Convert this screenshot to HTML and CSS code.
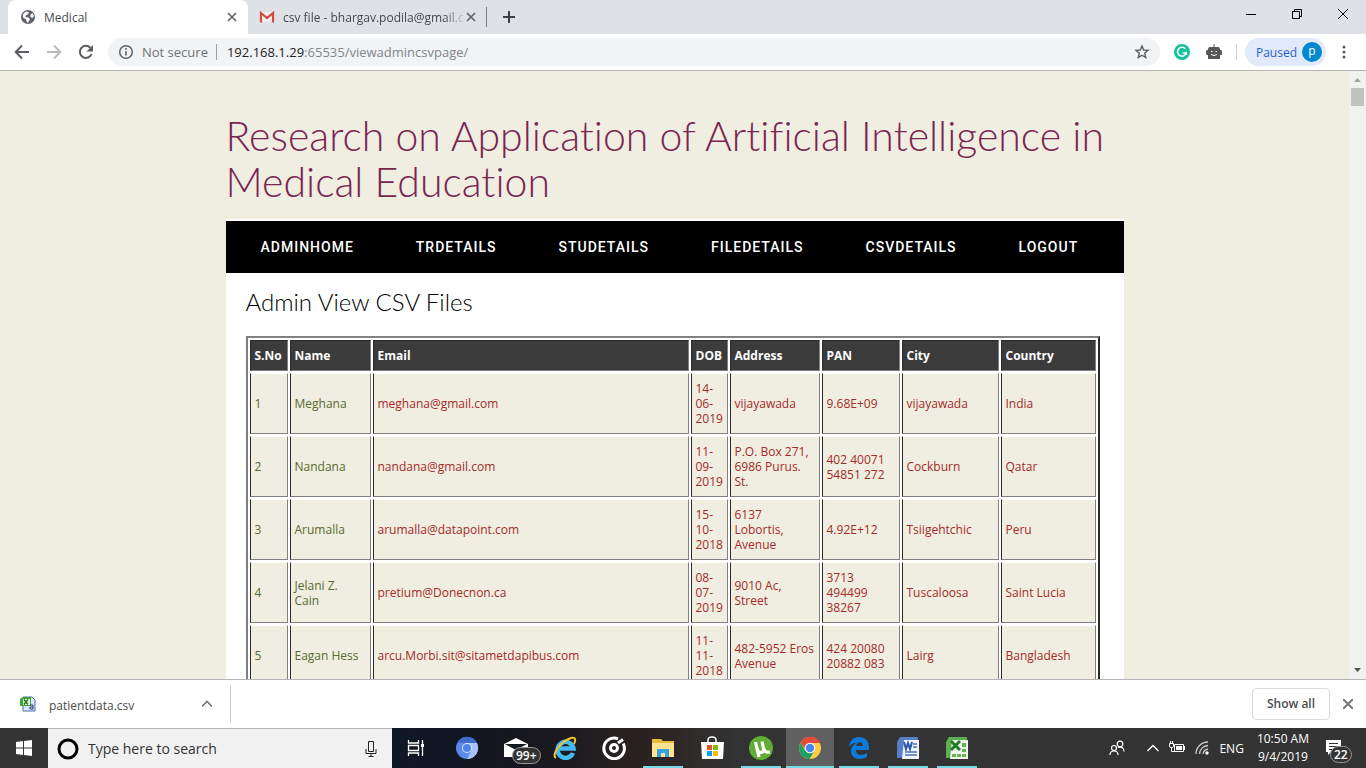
FILE: index.html
```html
<!DOCTYPE html>
<html lang="en">
<head>
    <meta charset="utf-8">
    <title>Medical</title>
    <link rel="stylesheet" href="styles.css">
</head>
<body>
    <div class="tabs">
        <div class="tab active">
            <svg width="16" height="16" viewBox="0 0 16 16"><circle cx="8" cy="8" r="7" fill="#5f6368"/><path d="M3 5l3-2.500 3 .5-1 2.500-2 .5-.5 2 3 .5 1.500 2-2 3H7l-1-3-3-2zM10.500 5.500l2-1.500 1.500 3-1.500 2-2-1z" fill="#fff"/></svg>
            <span class="tab-title">Medical</span>
            <button class="icon" aria-label="Close tab"><svg width="10" height="10" viewBox="0 0 10 10"><path d="M1 1l8 8M9 1l-8 8" stroke="#5f6368" stroke-width="1.600"/></svg></button>
        </div>
        <div class="tab">
            <svg width="16" height="16" viewBox="0 0 16 16"><path d="M2 3h12v10H2z" fill="#eee"/><path d="M2 13.500V4l6 5 6-5v9.500" fill="none" stroke="#d54b3d" stroke-width="2.200"/></svg>
            <span class="tab-title fade">csv file - bhargav.podila@gmail.c</span>
            <button class="icon" aria-label="Close tab"><svg width="10" height="10" viewBox="0 0 10 10"><path d="M1 1l8 8M9 1l-8 8" stroke="#5f6368" stroke-width="1.600"/></svg></button>
        </div>
        <button class="icon new-tab" aria-label="New tab"><svg width="12" height="12" viewBox="0 0 12 12"><path d="M6 0v12M0 6h12" stroke="#3c4043" stroke-width="2"/></svg></button>
        <div class="window-buttons">
            <button class="icon" aria-label="Minimize"><svg width="10" height="10" viewBox="0 0 10 10"><path d="M0 5.500h10" stroke="#000"/></svg></button>
            <button class="icon" aria-label="Restore"><svg width="10" height="10" viewBox="0 0 10 10"><path d="M.5 2.500h7v7h-7zM2.500 2.500v-2h7v7h-2" fill="none" stroke="#000"/></svg></button>
            <button class="icon" aria-label="Close"><svg width="10" height="10" viewBox="0 0 10 10"><path d="M0 0l10 10M10 0L0 10" stroke="#000"/></svg></button>
        </div>
    </div>

    <div class="toolbar">
        <button class="icon" aria-label="Back"><svg width="16" height="16" viewBox="0 0 16 16"><path d="M15 8H2M8 1.500L1.700 8 8 14.500" fill="none" stroke="#5a5d61" stroke-width="1.900"/></svg></button>
        <button class="icon" aria-label="Forward"><svg width="16" height="16" viewBox="0 0 16 16"><path d="M1 8h13M8 1.500L14.300 8 8 14.500" fill="none" stroke="#b9bbbe" stroke-width="1.900"/></svg></button>
        <button class="icon" aria-label="Reload"><svg width="16" height="16" viewBox="0 0 16 16"><path d="M13.500 10A6 6 0 1 1 12.300 3.800" fill="none" stroke="#5a5d61" stroke-width="2"/><path d="M15 1v6.500H8.500z" fill="#5a5d61"/></svg></button>
        <div class="address">
            <svg width="16" height="16" viewBox="0 0 16 16"><circle cx="8" cy="8" r="6.300" fill="none" stroke="#5f6368" stroke-width="1.500"/><path d="M8 7v4.500M8 4v1.700" stroke="#5f6368" stroke-width="1.600"/></svg>
            <span class="not-secure">Not secure</span>
            <span class="url"><b>192.168.1.29</b>:65535/viewadmincsvpage/</span>
            <button class="icon" aria-label="Bookmark"><svg width="16" height="16" viewBox="0 0 16 16"><path d="M8 2l1.700 4 4.300.4-3.300 2.800 1 4.300L8 11.200l-3.700 2.300 1-4.300L2 6.400 6.300 6z" fill="none" stroke="#5a5d61" stroke-width="1.400"/></svg></button>
        </div>
        <div class="extensions">
            <svg width="16" height="16" viewBox="0 0 16 16"><circle cx="8" cy="8" r="8" fill="#15c39a"/><path d="M11.300 4.800A4.400 4.400 0 1 0 12.200 9H8.800M12.300 7.800V11" fill="none" stroke="#fff" stroke-width="1.500"/></svg>
            <svg width="16" height="16" viewBox="0 0 16 16"><path d="M7.500 0h1v3H12q2 0 2 3h1q1 0 1 2.500T15 11h-1v4H2v-4H1q-1 0-1-2.500T1 6h1q0-3 2-3h3.500z" fill="#555"/><path d="M5 7.500h1.500M9.500 7.500H11M5 10.500q3 2 6 0" fill="none" stroke="#fff"/></svg>
        </div>
        <button class="profile">Paused <span class="avatar">p</span></button>
        <button class="icon" aria-label="Menu"><svg width="16" height="16" viewBox="0 0 16 16"><path d="M8 3h0M8 8h0M8 13h0" stroke="#5a5d61" stroke-width="3" stroke-linecap="round"/></svg></button>
    </div>

    <div class="viewport">
        <div class="page">
            <div class="container">
                <h1>Research on Application of Artificial Intelligence in Medical Education</h1>
                <div class="main">
                    <nav>
                        <a href="#">ADMINHOME</a>
                        <a href="#">TRDETAILS</a>
                        <a href="#">STUDETAILS</a>
                        <a href="#">FILEDETAILS</a>
                        <a href="#">CSVDETAILS</a>
                        <a href="#">LOGOUT</a>
                    </nav>
                    <div class="content">
                        <h2>Admin View CSV Files</h2>
                        <table>
                            <colgroup>
                                <col class="col-no"><col class="col-name"><col><col class="col-dob"><col class="col-address"><col class="col-pan"><col class="col-city"><col class="col-country">
                            </colgroup>
                            <tr>
                                <th>S.No</th>
                                <th>Name</th>
                                <th>Email</th>
                                <th>DOB</th>
                                <th>Address</th>
                                <th>PAN</th>
                                <th>City</th>
                                <th>Country</th>
                            </tr>
                            <tr>
                                <td class="green">1</td>
                                <td class="green">Meghana</td>
                                <td>meghana@gmail.com</td>
                                <td>14-<br>06-<br>2019</td>
                                <td>vijayawada</td>
                                <td>9.68E+09</td>
                                <td>vijayawada</td>
                                <td>India</td>
                            </tr>
                            <tr>
                                <td class="green">2</td>
                                <td class="green">Nandana</td>
                                <td>nandana@gmail.com</td>
                                <td>11-<br>09-<br>2019</td>
                                <td>P.O. Box 271,<br>6986 Purus.<br>St.</td>
                                <td>402 40071<br>54851 272</td>
                                <td>Cockburn</td>
                                <td>Qatar</td>
                            </tr>
                            <tr>
                                <td class="green">3</td>
                                <td class="green">Arumalla</td>
                                <td>arumalla@datapoint.com</td>
                                <td>15-<br>10-<br>2018</td>
                                <td>6137<br>Lobortis,<br>Avenue</td>
                                <td>4.92E+12</td>
                                <td>Tsiigehtchic</td>
                                <td>Peru</td>
                            </tr>
                            <tr>
                                <td class="green">4</td>
                                <td class="green">Jelani Z.<br>Cain</td>
                                <td>pretium@Donecnon.ca</td>
                                <td>08-<br>07-<br>2019</td>
                                <td>9010 Ac,<br>Street</td>
                                <td>3713<br>494499<br>38267</td>
                                <td>Tuscaloosa</td>
                                <td>Saint Lucia</td>
                            </tr>
                            <tr>
                                <td class="green">5</td>
                                <td class="green">Eagan Hess</td>
                                <td>arcu.Morbi.sit@sitametdapibus.com</td>
                                <td>11-<br>11-<br>2018</td>
                                <td>482-5952 Eros<br>Avenue</td>
                                <td>424 20080<br>20882 083</td>
                                <td>Lairg</td>
                                <td>Bangladesh</td>
                            </tr>
                        </table>
                    </div>
                </div>
            </div>
        </div>
        <div class="scrollbar">
            <svg width="17" height="17" viewBox="0 0 17 17"><path d="M5 11l3.500-4 3.500 4z" fill="#a3a3a3"/></svg>
            <div class="thumb"></div>
            <svg width="17" height="17" viewBox="0 0 17 17"><path d="M5 6l3.500 4L12 6z" fill="#505050"/></svg>
        </div>
    </div>

    <div class="downloads">
        <button class="download">
            <svg width="16" height="16" viewBox="0 0 16 16"><path d="M3 1h9l3 3v11H3z" fill="#dbe6f8" stroke="#4a6ea9"/><path d="M0 3l3-2h8v9H0z" fill="#3fa535"/><path d="M3 3h7v6H3z" fill="#e9f7e4"/><path d="M4 3.500l4 5M8 3.500l-4 5" stroke="#217a21" stroke-width="1.500"/><path d="M10 9h3v4h-3v-2h3" fill="none" stroke="#243f7a"/></svg>
            <span>patientdata.csv</span>
            <svg width="10" height="10" viewBox="0 0 10 10"><path d="M0 7.500l5-5 5 5" fill="none" stroke="#777" stroke-width="1.700"/></svg>
        </button>
        <button class="show-all">Show all</button>
        <button class="icon" aria-label="Close downloads"><svg width="10" height="10" viewBox="0 0 10 10"><path d="M0 0l10 10M10 0L0 10" stroke="#777" stroke-width="2"/></svg></button>
    </div>

    <div class="taskbar">
        <button class="start" aria-label="Start"><svg width="16" height="16" viewBox="0 0 16 16"><path d="M0 2l7-1v6.500H0zM8 1l8-1v7.500H8zM0 8.500h7V15l-7-1zM8 8.500h8V16l-8-1z" fill="#fff"/></svg></button>
        <div class="search">
            <svg width="22" height="22" viewBox="0 0 22 22"><circle cx="11" cy="11" r="9" fill="none" stroke="#000" stroke-width="3"/></svg>
            <input type="text" aria-label="Search" placeholder="Type here to search">
            <svg width="12" height="16" viewBox="0 0 12 16"><path d="M3.500.5h5v10h-5zM1 8v4.500h10V8M6 12.500v3M3.500 15.500h5" fill="none" stroke="#222"/></svg>
        </div>
        <div class="apps">
            <button class="task-view" aria-label="Task view"><svg width="24" height="24" viewBox="0 0 24 24"><path d="M4.500 4v3h10V4M4.500 20v-3h10v3M4.500 9.500h10v5h-10zM18.500 4v16" fill="none" stroke="#fff" stroke-width="1.300"/><path d="M17 8h3v3h-3z" fill="#fff"/></svg></button>
            <button aria-label="Chromium"><svg width="24" height="24" viewBox="0 0 24 24"><circle cx="12" cy="12" r="11" fill="#5a8bea"/><path d="M12 7h10a11 11 0 0 1-10 16l4.500-8.500z" fill="#a6c4fb"/><path d="M2.500 6.500A11 11 0 0 1 22 7H12z" fill="#3e6dcc"/><circle cx="12" cy="12" r="5" fill="#dce8ff"/><circle cx="12" cy="12" r="4" fill="#4f82e6"/></svg></button>
            <button class="mail" aria-label="Mail"><svg width="24" height="24" viewBox="0 0 24 24"><path d="M0 8l12-6 12 6v13H0z" fill="#fff"/><path d="M1 8h22l-11 6z" fill="#141820"/></svg><span class="badge">99+</span></button>
            <button aria-label="Internet Explorer"><svg width="24" height="24" viewBox="0 0 24 24"><path d="M20 17A8 8 0 1 1 20.500 12.500H7" fill="none" stroke="#45baf0" stroke-width="4.500"/><path d="M3 22C-2 19 7 6 18 2c5-1 5 2 3 6" fill="none" stroke="#f3c431" stroke-width="2"/></svg></button>
            <button aria-label="Groove Music"><svg width="24" height="24" viewBox="0 0 24 24"><path d="M16 2.800A10.300 10.300 0 1 0 21.200 7.500" fill="none" stroke="#fff" stroke-width="3"/><circle cx="12" cy="12" r="3.500" fill="none" stroke="#fff" stroke-width="3"/><path d="M16 7l5-3.500" fill="none" stroke="#fff" stroke-width="3"/></svg></button>
            <button class="open" aria-label="File Explorer"><svg width="24" height="24" viewBox="0 0 24 24"><path d="M1 3h9l2 2h11v16H1z" fill="#e9b93c"/><path d="M1 7h22v14H1z" fill="#ffe391"/><path d="M6 21v-8h12v8h-4v-4h-4v4z" fill="#35a4df"/></svg></button>
            <button aria-label="Store"><svg width="24" height="24" viewBox="0 0 24 24"><path d="M8 7V4q0-3 4-3t4 3v3" fill="none" stroke="#fff" stroke-width="1.500"/><path d="M1 6h23l-1 17H2z" fill="#fff"/><path d="M7 9h5v5H7z" fill="#f25022"/><path d="M13 9h5v5h-5z" fill="#7fba00"/><path d="M7 15h5v5H7z" fill="#00a4ef"/><path d="M13 15h5v5h-5z" fill="#ffb900"/></svg></button>
            <button class="open" aria-label="uTorrent"><svg width="24" height="24" viewBox="0 0 24 24"><circle cx="12" cy="12" r="12" fill="#62ac35"/><path d="M6.500 6l3.500 15M8 12q1 5 4 4.500t2.500-4L13 5.500M14.500 12q1 5 6.500 4" fill="none" stroke="#fff" stroke-width="3.200"/></svg></button>
            <button class="open current" aria-label="Chrome"><svg width="24" height="24" viewBox="0 0 24 24"><circle cx="12" cy="12" r="11" fill="#ffcd40"/><path d="M2.500 6.500A11 11 0 0 1 22 7H12L7 13z" fill="#e44b3c"/><path d="M2.500 6.500A11 11 0 0 0 11.500 23l5-8.500L7 14.500z" fill="#1aa260"/><circle cx="12" cy="12" r="5.300" fill="#fff"/><circle cx="12" cy="12" r="4.200" fill="#4587f3"/></svg></button>
            <button class="open" aria-label="Edge"><svg width="24" height="24" viewBox="0 0 24 24"><path d="M2 11C3 3 8 1 12 1c6 0 10 4 10 10v3H9c0 6 7 6 11 3v4c-7 4-16 2-16-6 0-4 3-7 6-8-4 0-7 2-8 4zM9 10h7c0-5-6-5-7 0z" fill="#0a7bdb"/></svg></button>
            <button class="open" aria-label="Word"><svg width="24" height="24" viewBox="0 0 24 24"><path d="M4 1h18l-1 20-20 1V6z" fill="#577fc5"/><path d="M8 4h15v19H6z" fill="#eef3fc"/><path d="M8 6l2 7 2-6 2 6 2-7" fill="none" stroke="#2b57a4" stroke-width="2"/><path d="M17 8h4M17 11h4M9 16h12M9 19h12" stroke="#4a70b8" stroke-width="1.500"/></svg></button>
            <button class="open" aria-label="Excel"><svg width="24" height="24" viewBox="0 0 24 24"><path d="M4 1h18l-1 20-20 1V6z" fill="#5fae4f"/><path d="M7 4h16v19H5z" fill="#edf7ea"/><path d="M6 5l9 9M15 5l-9 9" stroke="#237a2b" stroke-width="3"/><path d="M17 7h4v4h-4zM17 13h4v3h-4zM7 18h4v3H7zM12 18h4v3h-4zM17 18h4v3h-4z" fill="#68b155"/></svg></button>
        </div>
        <div class="tray">
            <svg width="16" height="16" viewBox="0 0 16 16"><circle cx="11" cy="4" r="2.800" fill="none" stroke="#fff" stroke-width="1.200"/><circle cx="5" cy="8" r="2.500" fill="none" stroke="#fff" stroke-width="1.200"/><path d="M1 15q0-4 4-4t4 4M9 7.500q6-1.500 6 4" fill="none" stroke="#fff" stroke-width="1.200"/></svg>
            <svg class="chevron" width="12" height="12" viewBox="0 0 12 12"><path d="M.5 9L6 3.500 11.500 9" fill="none" stroke="#fff" stroke-width="1.300"/></svg>
            <svg width="16" height="16" viewBox="0 0 16 16"><path d="M5.500 4.500h9v7h-9zM.5 3.500h4v3q0 1-2 1t-2-1zM2.500 7.500v4h3M1.500 1v2M3.500 1v2" fill="none" stroke="#fff"/><path d="M7 6h6v4H7zM15 6h1v4h-1z" fill="#fff"/></svg>
            <svg width="14" height="14" viewBox="0 0 14 14"><path d="M1 13A12 12 0 0 1 13 1M4.500 13A9 9 0 0 1 13 4.500M8 13a6 6 0 0 1 5-5" fill="none" stroke="#ccc" stroke-width="1.300"/><circle cx="12" cy="12" r="1.700" fill="#fff"/></svg>
            <span>ENG</span>
            <div class="clock"><div>10:50 AM</div><div>9/4/2019</div></div>
            <button class="notifications" aria-label="Notifications"><svg width="18" height="18" viewBox="0 0 18 18"><path d="M1 1h15v12H6l-3 3v-3H1z" fill="#fff"/><path d="M4 4.500h9M4 7.500h9M4 10.500h5" stroke="#333"/></svg><span class="badge">22</span></button>
        </div>
    </div>
</body>
</html>
```
FILE: styles.css
```css
* {
    box-sizing: border-box;
}
body {
    margin: 0;
    height: 100vh;
    display: flex;
    flex-direction: column;
    overflow: hidden;
    font-family: "Open Sans", "Noto Sans", sans-serif;
    font-size: 12px;
    background-color: white;
}
button {
    margin: 0;
    padding: 0;
    border: none;
    background: none;
    font-family: inherit;
    font-size: 12px;
    cursor: pointer;
}
svg {
    display: block;
    flex: none;
}
.icon {
    display: flex;
    align-items: center;
    justify-content: center;
}

/* browser tabs */
.tabs {
    display: flex;
    height: 34px;
    flex: none;
    padding-left: 8px;
    background-color: #dee1e6;
}
.tab {
    display: flex;
    align-items: center;
    width: 238px;
    padding: 0 10px 0 11px;
    color: #45494d;
}
.tab.active {
    width: 240px;
    padding: 0 11px 0 12px;
    background-color: white;
    border-radius: 8px 8px 0 0;
}
.tab-title {
    flex: 1;
    margin-left: 8px;
    overflow: hidden;
    white-space: nowrap;
}
.fade {
    -webkit-mask-image: linear-gradient(to right, black 88%, transparent);
    mask-image: linear-gradient(to right, black 88%, transparent);
}
.new-tab {
    width: 44px;
    height: 20px;
    margin-top: 7px;
    border-left: 1px solid #808488;
}
.window-buttons {
    display: flex;
    gap: 36px;
    height: 28px;
    margin-left: auto;
    padding-right: 18px;
}

/* toolbar */
.toolbar {
    display: flex;
    align-items: center;
    height: 37px;
    flex: none;
    gap: 16px;
    padding: 0 14px;
    border-bottom: 1px solid #b6b4b6;
}
.address {
    display: flex;
    align-items: center;
    flex: 1;
    height: 28px;
    margin: 0 -2px;
    padding: 0 10px;
    background-color: #f1f3f4;
    border-radius: 14px;
    font-size: 13px;
    color: #80868b;
}
.not-secure {
    margin: 0 8px;
    color: #6f7479;
}
.url {
    flex: 1;
    padding-left: 10px;
    border-left: 1px solid #9aa0a6;
    line-height: 16px;
}
.url b {
    font-weight: normal;
    color: #202124;
}
.extensions {
    display: flex;
    gap: 16px;
    padding-right: 14px;
    border-right: 1px solid #d0d2d5;
}
.profile {
    display: flex;
    align-items: center;
    gap: 5px;
    height: 28px;
    margin: 0 -6px 0 -8px;
    padding: 0 4px 0 11px;
    background-color: #e1eafa;
    border-radius: 14px;
    color: #2a62cd;
}
.avatar {
    width: 20px;
    height: 20px;
    border-radius: 50%;
    background-color: #0288d1;
    color: white;
    line-height: 18px;
}

/* web page */
.viewport {
    display: flex;
    flex: 1;
    min-height: 0;
}
.page {
    flex: 1;
    overflow: hidden;
    background-color: #f0eee1;
}
.container {
    max-width: 898px;
    margin: 0 auto;
}
h1, h2 {
    font-family: Lato, sans-serif;
    font-weight: 300;
    font-variant-ligatures: none;
}
h1 {
    margin: 0;
    padding: 42px 0 14px;
    font-size: 41px;
    line-height: 46px;
    color: #7a2452;
}
.main {
    padding-top: 2px;
    background-color: white;
}
nav {
    display: flex;
    align-items: center;
    gap: 62px;
    height: 52px;
    padding-left: 35px;
    background-color: black;
    font-family: Roboto, Arial, sans-serif;
    font-size: 14px;
    font-weight: 500;
    letter-spacing: 1px;
}
nav a {
    color: white;
    text-decoration: none;
}
.content {
    padding: 14px 24px 20px 20px;
}
h2 {
    margin: 0 0 19px;
    font-size: 24px;
    line-height: 30px;
    color: black;
}
table {
    width: 100%;
    table-layout: fixed;
    border: 2px solid;
    border-color: #808080 #2b2b2b #2b2b2b #808080;
    border-spacing: 2px;
    font-size: 12px;
    line-height: 15px;
}
th, td {
    padding: 7px 0 7px 4px;
    border: 1px solid;
    border-color: #2b2b2b #808080 #808080 #2b2b2b;
    text-align: left;
    white-space: nowrap;
}
th {
    background-color: #3b3b3b;
    color: white;
}
td {
    border-top-color: white;
    background-color: #f0eee1;
    color: #a52a2a;
}
.green {
    color: #556b2f;
}
.col-no { width: 38px; }
.col-name { width: 81px; }
.col-dob { width: 37px; }
.col-address { width: 90px; }
.col-pan { width: 78px; }
.col-city { width: 97px; }
.col-country { width: 95px; }
.scrollbar {
    display: flex;
    flex-direction: column;
    width: 17px;
    background-color: #f1f1f1;
}
.thumb {
    height: 18px;
    margin: 0 2px auto;
    background-color: #c1c1c1;
}

/* downloads */
.downloads {
    display: flex;
    align-items: center;
    height: 49px;
    flex: none;
    padding-right: 13px;
    border-top: 1px solid #b6b4b6;
}
.download {
    display: flex;
    align-items: center;
    gap: 13px;
    width: 231px;
    height: 36px;
    padding: 0 18px 0 20px;
    border-right: 1px solid #c8c8c8;
    color: #4a4a4a;
}
.download span {
    flex: 1;
    padding-top: 3px;
    text-align: left;
}
.show-all {
    width: 78px;
    height: 32px;
    margin: 0 13px 0 auto;
    padding-bottom: 2px;
    border: 1px solid #dadce0;
    border-radius: 4px;
    font-weight: 600;
    color: #4a4d51;
}

/* taskbar */
.taskbar {
    display: flex;
    height: 40px;
    flex: none;
    background: linear-gradient(to right, #333 0, #0f1726 29%, #15161f 38%, #2a2220 47%, #333 54%);
    color: white;
}
.start {
    display: flex;
    align-items: center;
    justify-content: center;
    width: 48px;
    background-color: #333;
}
.search {
    display: flex;
    align-items: center;
    width: 344px;
    padding: 0 15px 0 9px;
    background-color: #f1f1f1;
    border-top: 1px solid #b6b4b6;
}
.search input {
    flex: 1;
    min-width: 0;
    padding: 0 9px;
    border: none;
    outline: none;
    background: none;
    font-family: inherit;
    font-size: 14px;
}
.search input::placeholder {
    color: #333;
}
.apps {
    display: flex;
    gap: 1px;
}
.apps button {
    display: flex;
    align-items: center;
    justify-content: center;
    width: 48px;
    position: relative;
}
.apps .task-view {
    margin-right: 2px;
}
.apps .open::after {
    content: "";
    position: absolute;
    left: 4px;
    right: 4px;
    bottom: 0;
    height: 2px;
    background-color: #76d9e6;
}
.apps .current {
    background-color: #606060;
}
.apps .current::after {
    left: 0;
    right: 0;
}
.badge {
    position: absolute;
    padding: 0 3px;
    border: 1px solid #999;
    border-radius: 9px;
    background-color: #333;
    color: white;
    font-size: 12px;
    font-weight: 600;
    line-height: 15px;
}
.mail .badge {
    left: 20px;
    bottom: 4px;
}
.tray {
    display: flex;
    align-items: center;
    gap: 10px;
    margin-left: auto;
    padding-right: 5px;
}
.chevron {
    margin-left: 12px;
}
.clock {
    margin-left: 3px;
    line-height: 18px;
    text-align: center;
}
.notifications {
    position: relative;
    width: 36px;
    margin-left: 6px;
}
.notifications .badge {
    left: 5px;
    top: 7px;
}
```
